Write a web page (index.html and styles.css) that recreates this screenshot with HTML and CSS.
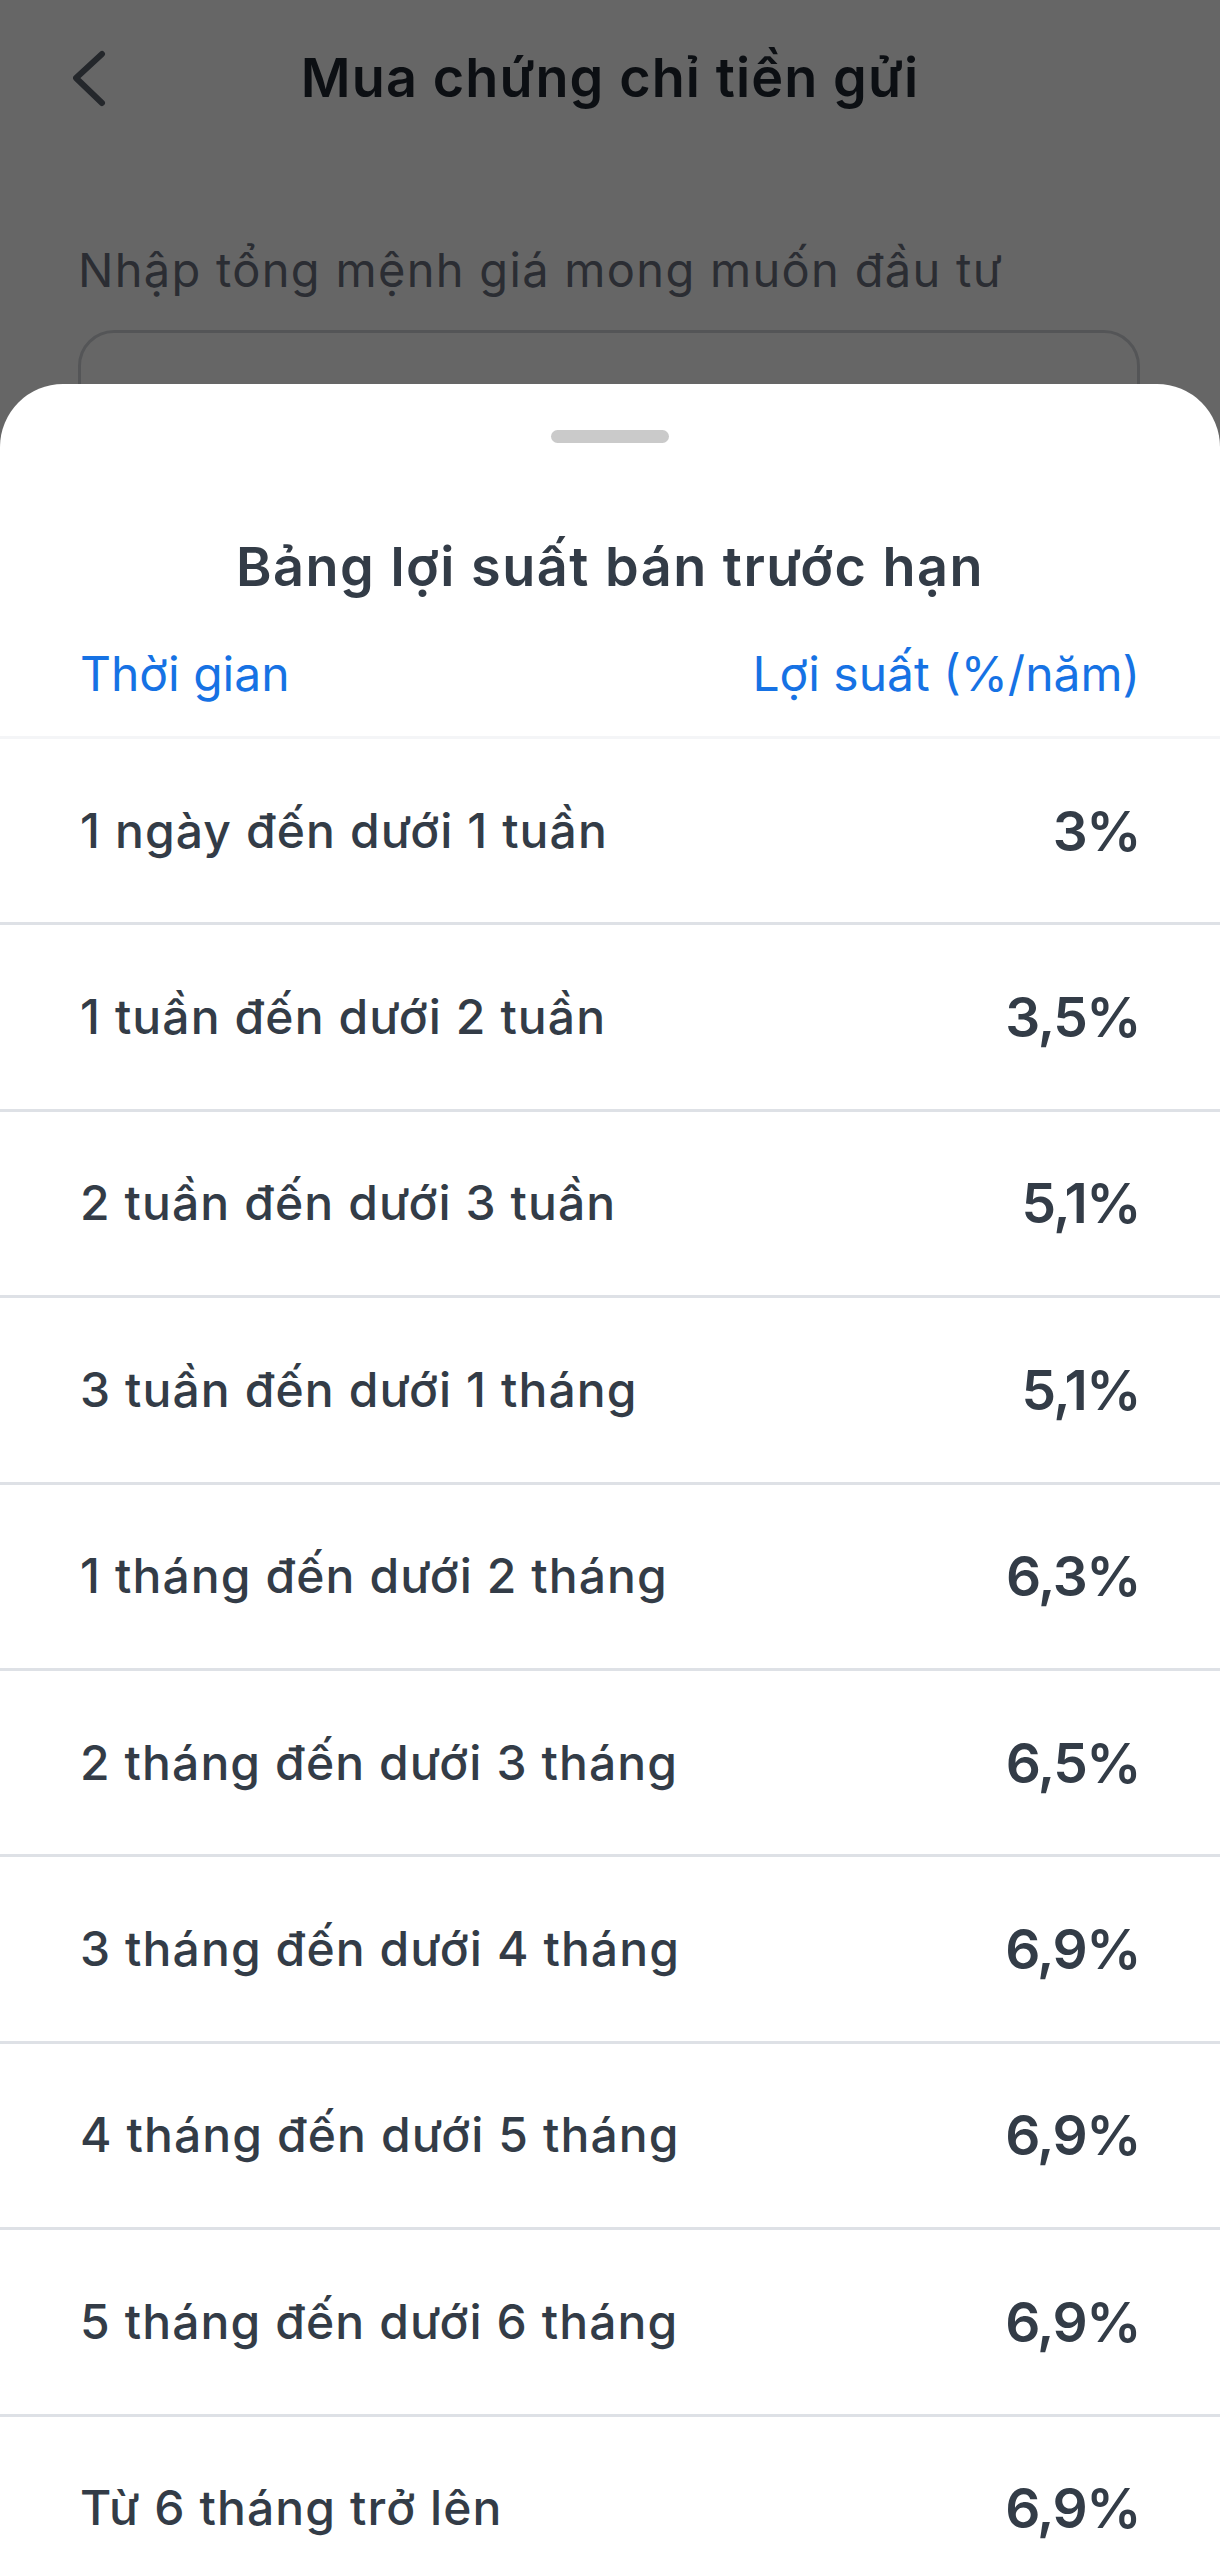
FILE: index.html
```html
<!DOCTYPE html>
<html lang="vi">
<head>
<meta charset="utf-8">
<title>Mua chứng chỉ tiền gửi</title>
<link rel="stylesheet" href="styles.css">
</head>
<body>
<div class="page">
  <header class="topbar">
    <div class="back">
      <svg width="40" height="60" viewBox="0 0 40 60" aria-hidden="true">
        <polyline points="29,6 3,30 29,55" fill="none" stroke="currentColor" stroke-width="6" stroke-linecap="round" stroke-linejoin="round"/>
      </svg>
    </div>
    <h1 class="topbar-title">Mua chứng chỉ tiền gửi</h1>
    <div></div>
  </header>
  <main class="form">
    <label class="field-label">Nhập tổng mệnh giá mong muốn đầu tư</label>
    <div class="field-input"></div>
  </main>
</div>

<div class="overlay"></div>

<section class="sheet">
  <div class="handle"></div>
  <h2 class="sheet-title">Bảng lợi suất bán trước hạn</h2>
  <div class="table-head">
    <span>Thời gian</span>
    <span>Lợi suất (%/năm)</span>
  </div>
  <div class="rows">
    <div class="row"><span class="term">1 ngày đến dưới 1 tuần</span><span class="rate">3%</span></div>
    <div class="row"><span class="term">1 tuần đến dưới 2 tuần</span><span class="rate">3,5%</span></div>
    <div class="row"><span class="term">2 tuần đến dưới 3 tuần</span><span class="rate">5,1%</span></div>
    <div class="row"><span class="term">3 tuần đến dưới 1 tháng</span><span class="rate">5,1%</span></div>
    <div class="row"><span class="term">1 tháng đến dưới 2 tháng</span><span class="rate">6,3%</span></div>
    <div class="row"><span class="term">2 tháng đến dưới 3 tháng</span><span class="rate">6,5%</span></div>
    <div class="row"><span class="term">3 tháng đến dưới 4 tháng</span><span class="rate">6,9%</span></div>
    <div class="row"><span class="term">4 tháng đến dưới 5 tháng</span><span class="rate">6,9%</span></div>
    <div class="row"><span class="term">5 tháng đến dưới 6 tháng</span><span class="rate">6,9%</span></div>
    <div class="row"><span class="term">Từ 6 tháng trở lên</span><span class="rate">6,9%</span></div>
  </div>
</section>
</body>
</html>
```

FILE: styles.css
```css
* { box-sizing: border-box; }

html, body {
  margin: 0;
  padding: 0;
}

body {
  width: 1220px;
  height: 2554px;
  overflow: hidden;
  position: relative;
  background: #ffffff;
  font-family: Inter, "Noto Sans", "DejaVu Sans", sans-serif;
}

.page {
  width: 1220px;
}

.topbar {
  height: 156px;
  display: grid;
  grid-template-columns: 1fr auto 1fr;
  align-items: center;
}

.back {
  padding-left: 73px;
  color: #5a616d;
  display: flex;
  align-items: center;
}

.back svg { display: block; }

.topbar-title {
  margin: 0;
  font-size: 54px;
  font-weight: 600;
  line-height: 64px;
  color: #1f2630;
  letter-spacing: 1.1px;
}

.form {
  padding: 0 80px 0 78px;
}

.field-label {
  display: block;
  margin-top: 85px;
  font-size: 47px;
  line-height: 58px;
  color: #6b7280;
  letter-spacing: 1.3px;
}

.field-input {
  margin-top: 31px;
  width: 1062px;
  height: 160px;
  border: 3px solid #d2d5da;
  border-radius: 36px;
}

.overlay {
  position: absolute;
  inset: 0;
  background: rgba(0, 0, 0, 0.6);
}

.sheet {
  position: absolute;
  top: 384px;
  left: 0;
  right: 0;
  bottom: 0;
  background: #ffffff;
  border-radius: 63px 63px 0 0;
  display: flex;
  flex-direction: column;
  align-items: stretch;
}

.sheet > * { flex: none; }

.handle {
  align-self: center;
  margin-top: 46px;
  width: 118px;
  height: 13px;
  border-radius: 7px;
  background: #cacaca;
}

.sheet-title {
  margin: 92px 0 0;
  text-align: center;
  font-size: 54px;
  font-weight: 600;
  line-height: 64px;
  color: #333c47;
  letter-spacing: 1.5px;
}

.table-head {
  margin-top: 46px;
  padding: 0 80px 33px 80px;
  display: flex;
  justify-content: space-between;
  font-size: 48px;
  line-height: 58px;
  color: #1672e4;
  border-bottom: 3px solid #f4f5f7;
}

.rows {
  display: flex;
  flex-direction: column;
}

.row {
  height: 186.4px;
  flex: none;
  padding: 0 80px 0 80px;
  display: flex;
  align-items: center;
  justify-content: space-between;
  border-bottom: 3px solid #dee1e6;
}

.term {
  font-size: 48px;
  font-weight: 500;
  line-height: 58px;
  color: #333c47;
  letter-spacing: 1.1px;
}

.rate {
  font-size: 55px;
  font-weight: 600;
  line-height: 66px;
  color: #333c47;
  letter-spacing: -1.5px;
}
```
